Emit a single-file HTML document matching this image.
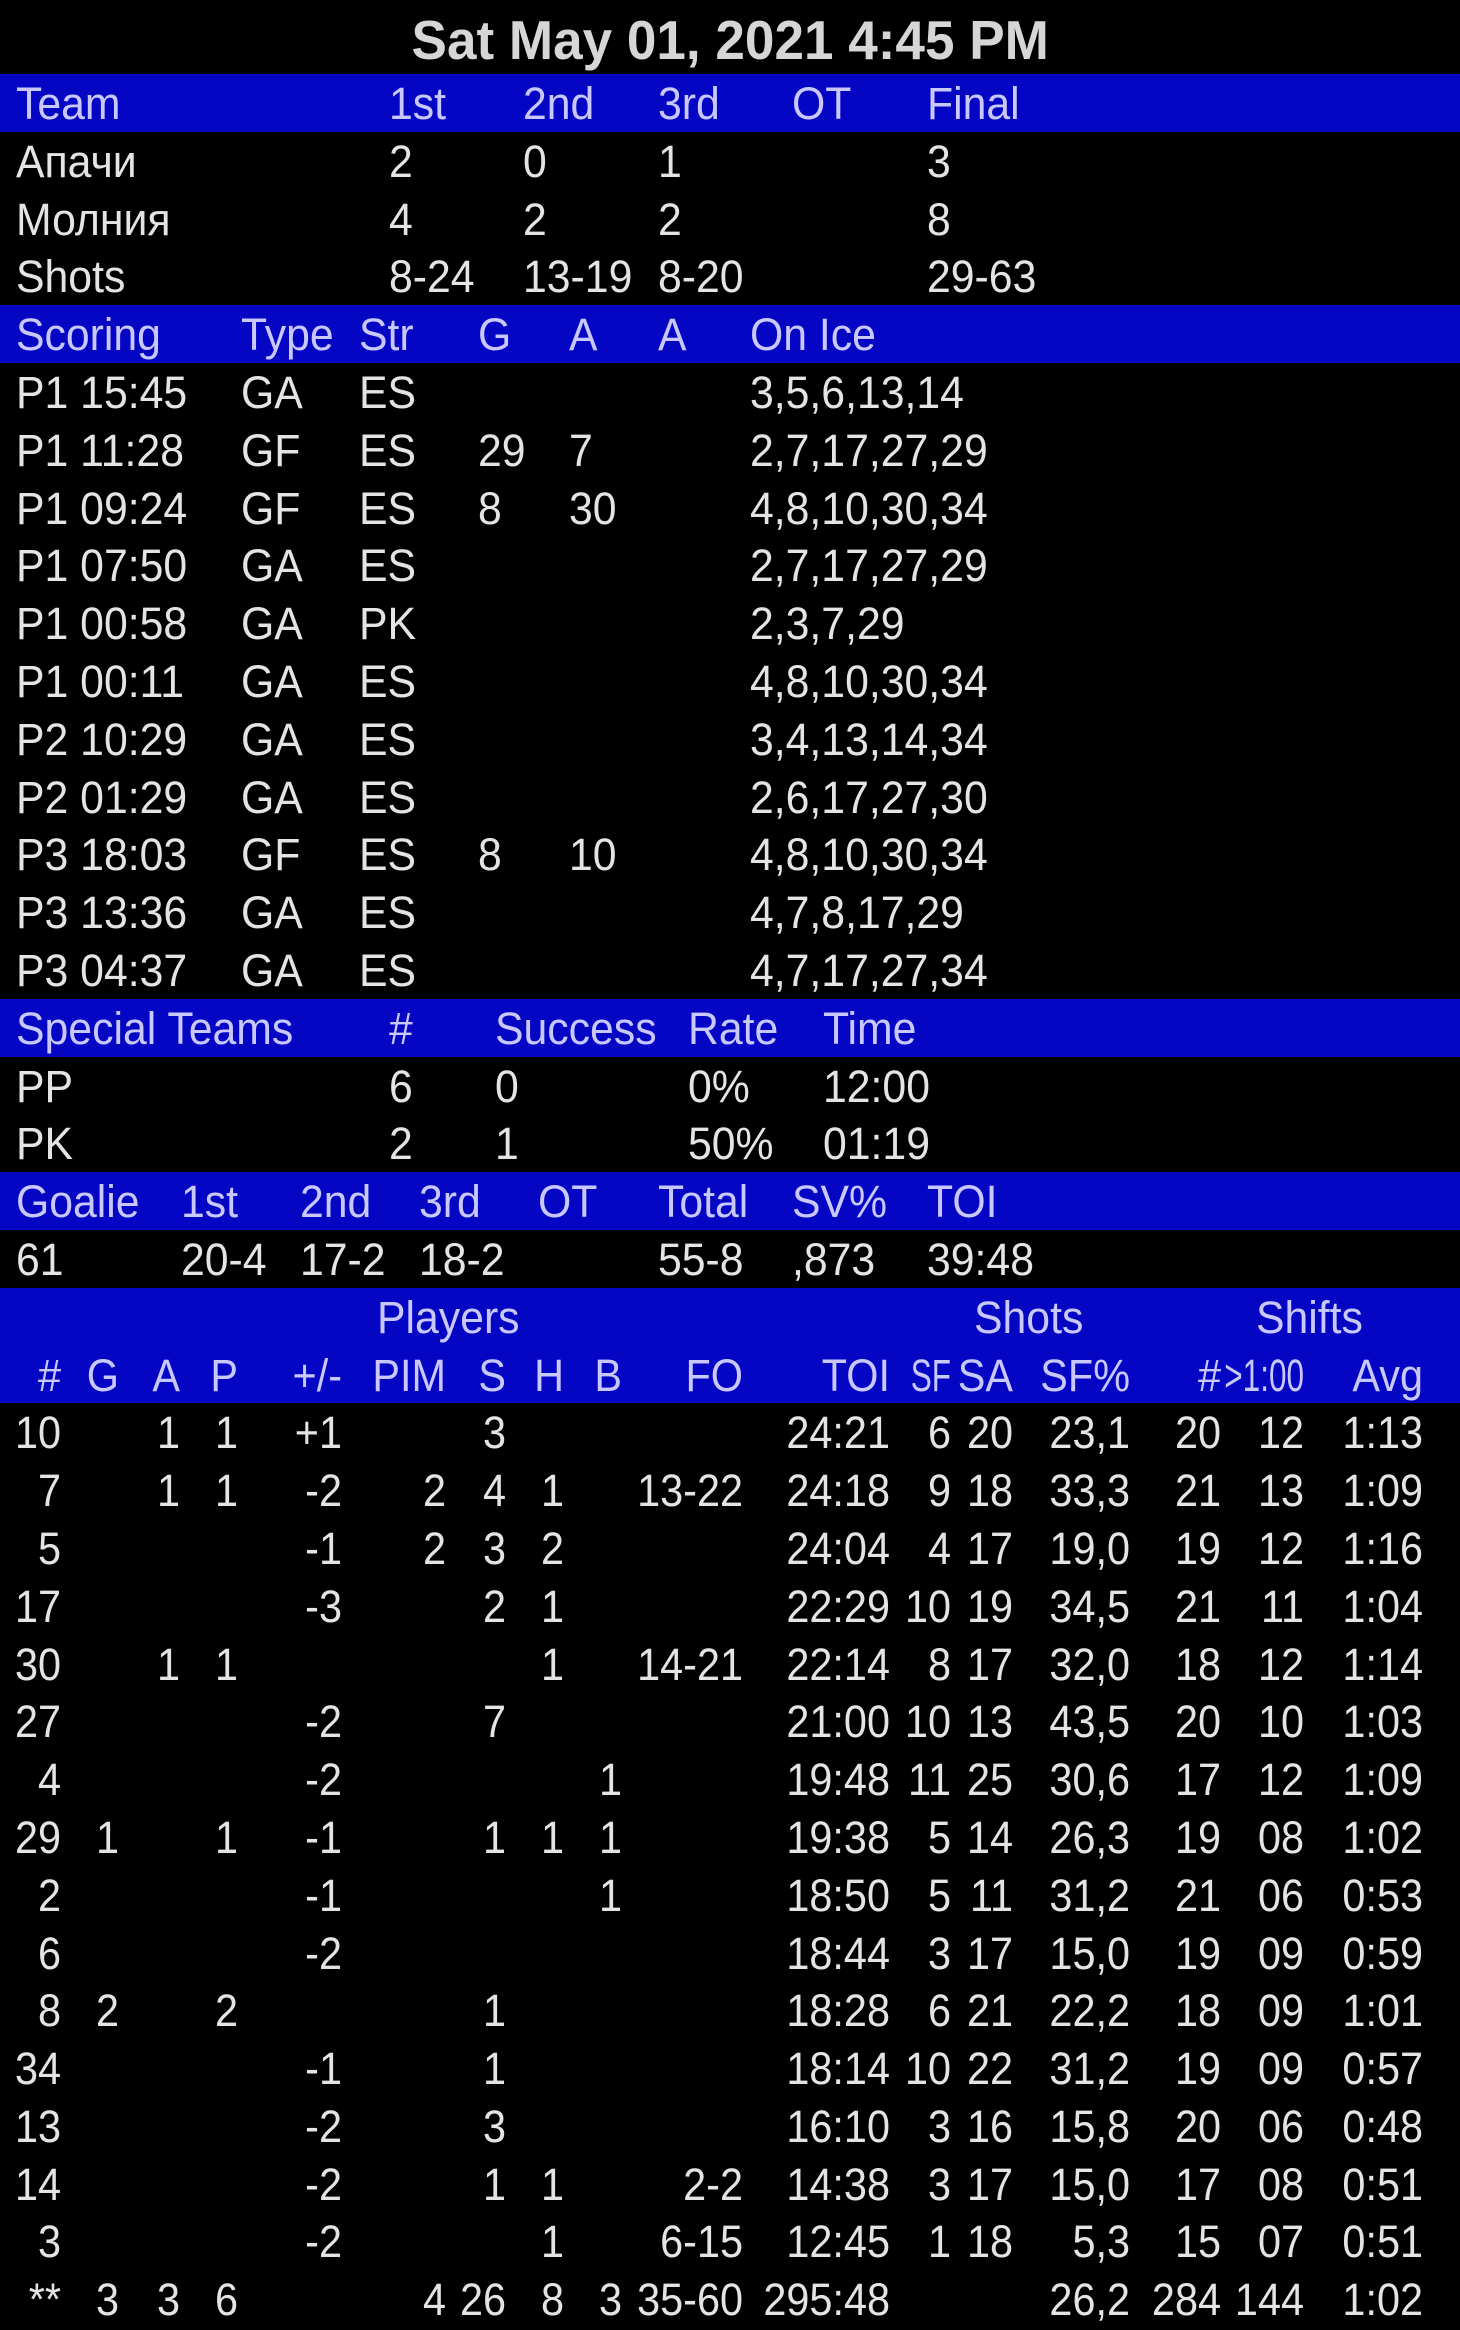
<!DOCTYPE html>
<html><head><meta charset="utf-8">
<style>
html,body{margin:0;padding:0;background:#000;}
body{width:1460px;height:2329px;overflow:hidden;font-family:"Liberation Sans",sans-serif;font-size:45px;color:#e4e4e4;}
.t{height:74px;line-height:80px;text-align:center;font-weight:bold;font-size:55px;color:#d6d6d6;}
.t div{display:inline-block;transform:scaleX(.965);}
.r{height:57.8px;position:relative;line-height:60px;white-space:nowrap;}
.h{background:#0505c4;color:#c8c8ff;}
.r span{position:absolute;top:0;transform:scaleX(.95);transform-origin:0 50%;}
.r b{position:absolute;top:0;font-weight:normal;transform:translateX(-100%) scaleX(.92);transform-origin:100% 50%;}
.r b.n{transform:translateX(-100%) scaleX(.7);}
</style></head><body>
<div class="t"><div>Sat May 01, 2021 4:45 PM</div></div>
<div class="r h"><span style="left:16px">Team</span><span style="left:389px">1st</span><span style="left:523px">2nd</span><span style="left:658px">3rd</span><span style="left:792px">OT</span><span style="left:927px">Final</span></div>
<div class="r"><span style="left:16px">Апачи</span><span style="left:389px">2</span><span style="left:523px">0</span><span style="left:658px">1</span><span style="left:927px">3</span></div>
<div class="r"><span style="left:16px">Молния</span><span style="left:389px">4</span><span style="left:523px">2</span><span style="left:658px">2</span><span style="left:927px">8</span></div>
<div class="r"><span style="left:16px">Shots</span><span style="left:389px">8-24</span><span style="left:523px">13-19</span><span style="left:658px">8-20</span><span style="left:927px">29-63</span></div>
<div class="r h"><span style="left:16px">Scoring</span><span style="left:241px">Type</span><span style="left:359px">Str</span><span style="left:478px">G</span><span style="left:569px">A</span><span style="left:658px">A</span><span style="left:750px">On Ice</span></div>
<div class="r"><span style="left:16px">P1 15:45</span><span style="left:241px">GA</span><span style="left:359px">ES</span><span style="left:750px">3,5,6,13,14</span></div>
<div class="r"><span style="left:16px">P1 11:28</span><span style="left:241px">GF</span><span style="left:359px">ES</span><span style="left:478px">29</span><span style="left:569px">7</span><span style="left:750px">2,7,17,27,29</span></div>
<div class="r"><span style="left:16px">P1 09:24</span><span style="left:241px">GF</span><span style="left:359px">ES</span><span style="left:478px">8</span><span style="left:569px">30</span><span style="left:750px">4,8,10,30,34</span></div>
<div class="r"><span style="left:16px">P1 07:50</span><span style="left:241px">GA</span><span style="left:359px">ES</span><span style="left:750px">2,7,17,27,29</span></div>
<div class="r"><span style="left:16px">P1 00:58</span><span style="left:241px">GA</span><span style="left:359px">PK</span><span style="left:750px">2,3,7,29</span></div>
<div class="r"><span style="left:16px">P1 00:11</span><span style="left:241px">GA</span><span style="left:359px">ES</span><span style="left:750px">4,8,10,30,34</span></div>
<div class="r"><span style="left:16px">P2 10:29</span><span style="left:241px">GA</span><span style="left:359px">ES</span><span style="left:750px">3,4,13,14,34</span></div>
<div class="r"><span style="left:16px">P2 01:29</span><span style="left:241px">GA</span><span style="left:359px">ES</span><span style="left:750px">2,6,17,27,30</span></div>
<div class="r"><span style="left:16px">P3 18:03</span><span style="left:241px">GF</span><span style="left:359px">ES</span><span style="left:478px">8</span><span style="left:569px">10</span><span style="left:750px">4,8,10,30,34</span></div>
<div class="r"><span style="left:16px">P3 13:36</span><span style="left:241px">GA</span><span style="left:359px">ES</span><span style="left:750px">4,7,8,17,29</span></div>
<div class="r"><span style="left:16px">P3 04:37</span><span style="left:241px">GA</span><span style="left:359px">ES</span><span style="left:750px">4,7,17,27,34</span></div>
<div class="r h"><span style="left:16px">Special Teams</span><span style="left:389px">#</span><span style="left:495px">Success</span><span style="left:688px">Rate</span><span style="left:823px">Time</span></div>
<div class="r"><span style="left:16px">PP</span><span style="left:389px">6</span><span style="left:495px">0</span><span style="left:688px">0%</span><span style="left:823px">12:00</span></div>
<div class="r"><span style="left:16px">PK</span><span style="left:389px">2</span><span style="left:495px">1</span><span style="left:688px">50%</span><span style="left:823px">01:19</span></div>
<div class="r h"><span style="left:16px">Goalie</span><span style="left:181px">1st</span><span style="left:300px">2nd</span><span style="left:419px">3rd</span><span style="left:538px">OT</span><span style="left:658px">Total</span><span style="left:792px">SV%</span><span style="left:927px">TOI</span></div>
<div class="r"><span style="left:16px">61</span><span style="left:181px">20-4</span><span style="left:300px">17-2</span><span style="left:419px">18-2</span><span style="left:658px">55-8</span><span style="left:792px">,873</span><span style="left:927px">39:48</span></div>
<div class="r h"><span style="left:377px">Players</span><span style="left:974px">Shots</span><span style="left:1256px">Shifts</span></div>
<div class="r h"><b style="left:61px">#</b><b style="left:119px">G</b><b style="left:180px">A</b><b style="left:238px">P</b><b style="left:342px">+/-</b><b style="left:446px">PIM</b><b style="left:506px">S</b><b style="left:564px">H</b><b style="left:622px">B</b><b style="left:743px">FO</b><b style="left:890px">TOI</b><b style="left:951px" class="n">SF</b><b style="left:1013px">SA</b><b style="left:1130px">SF%</b><b style="left:1221px">#</b><b style="left:1304px" class="n">&gt;1:00</b><b style="left:1423px">Avg</b></div>
<div class="r"><b style="left:61px">10</b><b style="left:180px">1</b><b style="left:238px">1</b><b style="left:342px">+1</b><b style="left:506px">3</b><b style="left:890px">24:21</b><b style="left:951px">6</b><b style="left:1013px">20</b><b style="left:1130px">23,1</b><b style="left:1221px">20</b><b style="left:1304px">12</b><b style="left:1423px">1:13</b></div>
<div class="r"><b style="left:61px">7</b><b style="left:180px">1</b><b style="left:238px">1</b><b style="left:342px">-2</b><b style="left:446px">2</b><b style="left:506px">4</b><b style="left:564px">1</b><b style="left:743px">13-22</b><b style="left:890px">24:18</b><b style="left:951px">9</b><b style="left:1013px">18</b><b style="left:1130px">33,3</b><b style="left:1221px">21</b><b style="left:1304px">13</b><b style="left:1423px">1:09</b></div>
<div class="r"><b style="left:61px">5</b><b style="left:342px">-1</b><b style="left:446px">2</b><b style="left:506px">3</b><b style="left:564px">2</b><b style="left:890px">24:04</b><b style="left:951px">4</b><b style="left:1013px">17</b><b style="left:1130px">19,0</b><b style="left:1221px">19</b><b style="left:1304px">12</b><b style="left:1423px">1:16</b></div>
<div class="r"><b style="left:61px">17</b><b style="left:342px">-3</b><b style="left:506px">2</b><b style="left:564px">1</b><b style="left:890px">22:29</b><b style="left:951px">10</b><b style="left:1013px">19</b><b style="left:1130px">34,5</b><b style="left:1221px">21</b><b style="left:1304px">11</b><b style="left:1423px">1:04</b></div>
<div class="r"><b style="left:61px">30</b><b style="left:180px">1</b><b style="left:238px">1</b><b style="left:564px">1</b><b style="left:743px">14-21</b><b style="left:890px">22:14</b><b style="left:951px">8</b><b style="left:1013px">17</b><b style="left:1130px">32,0</b><b style="left:1221px">18</b><b style="left:1304px">12</b><b style="left:1423px">1:14</b></div>
<div class="r"><b style="left:61px">27</b><b style="left:342px">-2</b><b style="left:506px">7</b><b style="left:890px">21:00</b><b style="left:951px">10</b><b style="left:1013px">13</b><b style="left:1130px">43,5</b><b style="left:1221px">20</b><b style="left:1304px">10</b><b style="left:1423px">1:03</b></div>
<div class="r"><b style="left:61px">4</b><b style="left:342px">-2</b><b style="left:622px">1</b><b style="left:890px">19:48</b><b style="left:951px">11</b><b style="left:1013px">25</b><b style="left:1130px">30,6</b><b style="left:1221px">17</b><b style="left:1304px">12</b><b style="left:1423px">1:09</b></div>
<div class="r"><b style="left:61px">29</b><b style="left:119px">1</b><b style="left:238px">1</b><b style="left:342px">-1</b><b style="left:506px">1</b><b style="left:564px">1</b><b style="left:622px">1</b><b style="left:890px">19:38</b><b style="left:951px">5</b><b style="left:1013px">14</b><b style="left:1130px">26,3</b><b style="left:1221px">19</b><b style="left:1304px">08</b><b style="left:1423px">1:02</b></div>
<div class="r"><b style="left:61px">2</b><b style="left:342px">-1</b><b style="left:622px">1</b><b style="left:890px">18:50</b><b style="left:951px">5</b><b style="left:1013px">11</b><b style="left:1130px">31,2</b><b style="left:1221px">21</b><b style="left:1304px">06</b><b style="left:1423px">0:53</b></div>
<div class="r"><b style="left:61px">6</b><b style="left:342px">-2</b><b style="left:890px">18:44</b><b style="left:951px">3</b><b style="left:1013px">17</b><b style="left:1130px">15,0</b><b style="left:1221px">19</b><b style="left:1304px">09</b><b style="left:1423px">0:59</b></div>
<div class="r"><b style="left:61px">8</b><b style="left:119px">2</b><b style="left:238px">2</b><b style="left:506px">1</b><b style="left:890px">18:28</b><b style="left:951px">6</b><b style="left:1013px">21</b><b style="left:1130px">22,2</b><b style="left:1221px">18</b><b style="left:1304px">09</b><b style="left:1423px">1:01</b></div>
<div class="r"><b style="left:61px">34</b><b style="left:342px">-1</b><b style="left:506px">1</b><b style="left:890px">18:14</b><b style="left:951px">10</b><b style="left:1013px">22</b><b style="left:1130px">31,2</b><b style="left:1221px">19</b><b style="left:1304px">09</b><b style="left:1423px">0:57</b></div>
<div class="r"><b style="left:61px">13</b><b style="left:342px">-2</b><b style="left:506px">3</b><b style="left:890px">16:10</b><b style="left:951px">3</b><b style="left:1013px">16</b><b style="left:1130px">15,8</b><b style="left:1221px">20</b><b style="left:1304px">06</b><b style="left:1423px">0:48</b></div>
<div class="r"><b style="left:61px">14</b><b style="left:342px">-2</b><b style="left:506px">1</b><b style="left:564px">1</b><b style="left:743px">2-2</b><b style="left:890px">14:38</b><b style="left:951px">3</b><b style="left:1013px">17</b><b style="left:1130px">15,0</b><b style="left:1221px">17</b><b style="left:1304px">08</b><b style="left:1423px">0:51</b></div>
<div class="r"><b style="left:61px">3</b><b style="left:342px">-2</b><b style="left:564px">1</b><b style="left:743px">6-15</b><b style="left:890px">12:45</b><b style="left:951px">1</b><b style="left:1013px">18</b><b style="left:1130px">5,3</b><b style="left:1221px">15</b><b style="left:1304px">07</b><b style="left:1423px">0:51</b></div>
<div class="r"><b style="left:61px">**</b><b style="left:119px">3</b><b style="left:180px">3</b><b style="left:238px">6</b><b style="left:446px">4</b><b style="left:506px">26</b><b style="left:564px">8</b><b style="left:622px">3</b><b style="left:743px">35-60</b><b style="left:890px">295:48</b><b style="left:1130px">26,2</b><b style="left:1221px">284</b><b style="left:1304px">144</b><b style="left:1423px">1:02</b></div>
</body></html>
